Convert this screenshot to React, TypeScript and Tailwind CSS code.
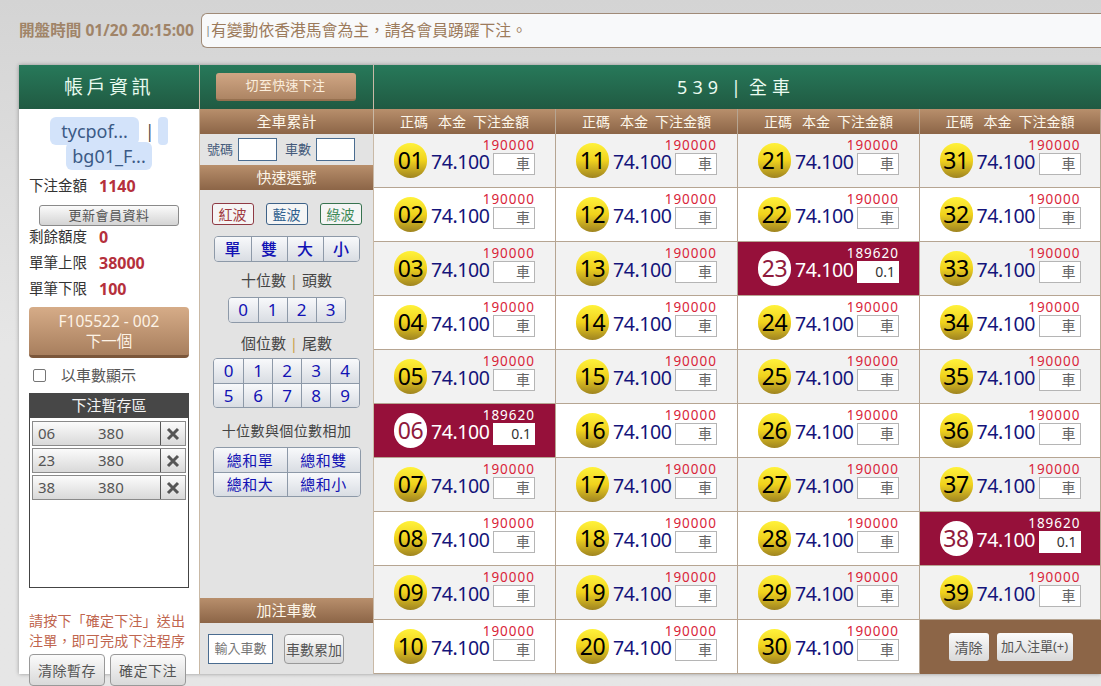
const sans = 'font-["Noto_Sans","Noto_Sans_CJK_TC",sans-serif]';
const brownBase = "bg-gradient-to-b from-[#b88f6c] to-[#8c6547] text-[#fdf6e9] text-center shrink-0";
const brownBar = brownBase + " text-[15px]";
const silver = "bg-gradient-to-b from-[#fbfbfb] to-[#d9d9d9]";
const blueBtn = "bg-gradient-to-b from-[#f8f9fb] to-[#d9dde3] text-[#1212b4] flex items-center justify-center border-[#8d99a8]";

function Ball({ n, active }: { n: string; active: boolean }) {
  return (
    <div
      className={
        "w-[33px] h-[35px] rounded-full flex items-center justify-center text-[23px] tracking-[-0.5px] leading-none shrink-0 " +
        (active
          ? "bg-white text-[#8f1a3c]"
          : "bg-gradient-to-b from-[#fff23a] via-[#f0d21c] to-[#9f8420] text-black")
      }
    >
      {n}
    </div>
  );
}

function Cell({ num, row }: { num: number; row: number }) {
  const n = String(num).padStart(2, "0");
  const active = num === 6 || num === 23 || num === 38;
  const bg = active ? "bg-[#96103a]" : row % 2 === 0 ? "bg-[#f2f2f2]" : "bg-white";
  return (
    <div className={"w-full h-[54px] shrink-0 flex items-center justify-center border-b border-r border-[#b6a592] " + bg}>
      <div className="flex items-center w-[141px] shrink-0">
        <Ball n={n} active={active} />
        <span className={"ml-[4px] mt-[3px] w-[58px] shrink-0 whitespace-nowrap text-[19.5px] leading-none tracking-[-0.4px] " + (active ? "text-white" : "text-[#14147a]")}>74.100</span>
        <div className="ml-[4px] w-[42px] shrink-0 flex flex-col items-end mb-[8px]">
          <span className={"text-[13.5px] leading-[14px] tracking-[1px] whitespace-nowrap " + (active ? "text-white" : "text-[#d9253a]")}>
            {active ? "189620" : "190000"}
          </span>
          <div className={"w-[42px] h-[22px] mt-[1px] flex items-center justify-end pr-[4px] text-[14px] leading-none " + (active ? "bg-white text-[#333]" : "bg-white border border-[#b5b5b5] text-[#666]")}>
            {active ? "0.1" : "車"}
          </div>
        </div>
      </div>
    </div>
  );
}

function Column({ start, last }: { start: number; last?: boolean }) {
  const nums = Array.from({ length: 10 }, (_, i) => start + i);
  return (
    <div className={(last ? "w-[181px]" : "w-[182px]") + " shrink-0 flex flex-col"}>
      <div className={brownBase + " h-[25px] flex items-center justify-center text-[14px] border-r border-[#b6a592]"}>
        <span>正碼</span><span className="ml-[10px]">本金</span><span className="ml-[7px]">下注金額</span>
      </div>
      {nums.map((num, i) =>
        last && i === 9 ? (
          <div key={num} className="h-[54px] shrink-0 bg-[#8c6547] flex items-center justify-center gap-[8px]">
            <div className={silver + " w-[40px] h-[28px] rounded-[3px] text-[#555] text-[14px] flex items-center justify-center"}>清除</div>
            <div className={silver + " w-[76px] h-[28px] rounded-[3px] text-[#555] text-[13px] flex items-center justify-center whitespace-nowrap"}>加入注單(+)</div>
          </div>
        ) : (
          <Cell key={num} num={num} row={i} />
        )
      )}
    </div>
  );
}

function Stat({ label, value }: { label: string; value: string }) {
  return (
    <div className="flex items-center h-[26px] shrink-0 pl-[10px] text-[14.5px] text-[#333]">
      <span>{label}</span>
      <span className="ml-[12px] font-bold text-[#b5303c] text-[16px]">{value}</span>
    </div>
  );
}

function Saved({ n }: { n: string }) {
  return (
    <div className={silver + " flex h-[25px] border border-[#8a8a8a] items-center text-[15px] text-[#555] mb-[2px]"}>
      <span className="w-[65px] pl-[5px]">{n}</span>
      <span className="w-[62px]">380</span>
      <span className="flex-1 h-full border-l border-[#555] flex items-center justify-center">
        <svg width="14" height="14" viewBox="0 0 14 14"><path d="M2 2 12 12M12 2 2 12" stroke="#555" strokeWidth="3" /></svg>
      </span>
    </div>
  );
}

function BtnRow({ items, w, h, text = "text-[18px]" }: { items: string[]; w: number; h: number; text?: string }) {
  return (
    <div className="flex rounded-[4px] border border-[#8d99a8] overflow-hidden">
      {items.map((t, i) => (
        <div key={t} style={{ width: w, height: h }} className={blueBtn + " " + text + (i ? " border-l" : "")}>{t}</div>
      ))}
    </div>
  );
}

export default function App() {
  return (
    <div className={sans + " w-[1101px] h-[686px] overflow-hidden bg-gradient-to-b from-[#d4d4d4] via-[#e6e6e6] to-[#e6e6e6] pt-[13px]"}>
      <div className="flex items-center h-[35px] pl-[19px]">
        <span className="text-[#a08468] font-bold text-[15.6px] w-[182px] whitespace-nowrap">開盤時間 01/20 20:15:00</span>
        <div className="flex-1 h-[35px] rounded-l-[6px] border border-[#a08b78] border-r-0 bg-[#f8f9fa] flex items-center pl-[3px] text-[15.8px] text-[#9c7b5c]">
          <span className="w-[6px] text-[11px] text-[#777]">|</span>
          <span>有變動依香港馬會為主，請各會員踴躍下注。</span>
        </div>
      </div>

      <div className="ml-[19px] mt-[17px] flex h-[609px] bg-white shadow-[0_0_4px_rgba(0,0,0,0.35)]">
        {/* left */}
        <div className="w-[180px] shrink-0 flex flex-col">
          <div className="h-[44px] shrink-0 bg-gradient-to-b from-[#27795a] to-[#205a42] text-[#e8fbef] text-[19px] tracking-[3.5px] flex items-center justify-center">帳戶資訊</div>
          <div className="mt-[10px] shrink-0 text-center text-[18px] leading-[25px] text-[#3b5a86]">
            <span className="bg-[#d3e3fa] rounded-[6px] px-[11px] py-[2px]">tycpof...</span>
            <span className="ml-[6px] mr-[3px] text-[#555]">|</span>
            <span className="bg-[#d3e3fa] rounded-[4px] pl-[10px] py-[2px]"></span>
            <br />
            <span className="bg-[#d3e3fa] rounded-[6px] px-[6px] py-[2px]">bg01_F...</span>
          </div>
          <div className="mt-[4px] shrink-0"><Stat label="下注金額" value="1140" /></div>
          <div className="mx-[20px] mt-[6px] h-[21px] shrink-0 border border-[#8a8a8a] rounded-[3px] bg-gradient-to-b from-[#fbfbfb] to-[#d4d4d4] text-[#555] text-[13px] tracking-[0.5px] flex items-center justify-center">更新會員資料</div>
          <div className="-mt-[2px] shrink-0"><Stat label="剩餘額度" value="0" /></div>
          <Stat label="單筆上限" value="38000" />
          <Stat label="單筆下限" value="100" />
          <div className="mx-[10px] mt-[5px] h-[51px] shrink-0 rounded-[4px] bg-gradient-to-b from-[#d6ac88] to-[#a87f5e] border-b-[3px] border-[#7b573b] text-[#fdf3e6] text-[15.5px] leading-[20px] flex flex-col items-center justify-center">
            <span>F105522 - 002</span><span>下一個</span>
          </div>
          <label className="flex items-center h-[35px] shrink-0 pl-[14px] text-[15px] text-[#555]">
            <span className="w-[13px] h-[13px] border border-[#767676] rounded-[2px] bg-white" />
            <span className="ml-[15px]">以車數顯示</span>
          </label>
          <div className="mx-[10px] h-[195px] shrink-0 border border-[#444] border-t-0 flex flex-col">
            <div className="h-[25px] shrink-0 -mx-[1px] bg-[#474747] text-[#f4f4f4] text-[15px] flex items-center justify-center">下注暫存區</div>
            <div className="p-[2px] pt-[3px]">
              <Saved n="06" /><Saved n="23" /><Saved n="38" />
            </div>
          </div>
          <div className="mx-[10px] mt-[23px] shrink-0 text-[#c0654e] text-[14px] leading-[20px] tracking-[0.2px] whitespace-nowrap">請按下「確定下注」送出<br />注單，即可完成下注程序</div>
          <div className="mx-[10px] mt-[3px] shrink-0 flex gap-[5px]">
            <div className={silver + " w-[76px] h-[32px] shrink-0 rounded-[4px] border border-[#999] text-[#555] text-[14px] tracking-[0.5px] flex items-center justify-center"}>清除暫存</div>
            <div className={silver + " w-[76px] h-[32px] shrink-0 rounded-[4px] border border-[#999] text-[#555] text-[14px] tracking-[0.5px] flex items-center justify-center"}>確定下注</div>
          </div>
        </div>

        {/* middle */}
        <div className="w-[175px] shrink-0 flex flex-col bg-[#e3e3e3] border-l border-r border-[#c9b9a6]">
          <div className="h-[44px] shrink-0 bg-gradient-to-b from-[#27795a] to-[#205a42] flex items-center justify-center pr-[2px]">
            <div className="w-[140px] h-[28px] rounded-[3px] bg-gradient-to-b from-[#d0a684] to-[#ad8564] border-b-2 border-[#96704f] text-[#fbeedd] text-[13px] tracking-[0.3px] flex items-center justify-center">切至快速下注</div>
          </div>
          <div className={brownBar + " h-[25px] leading-[25px]"}>全車累計</div>
          <div className="h-[31px] shrink-0 flex items-center pl-[7px] text-[13px] text-[#44597a]">
            <span>號碼</span>
            <span className="ml-[5px] w-[39px] h-[23px] bg-white border border-[#4a6c90]" />
            <span className="ml-[8px]">車數</span>
            <span className="ml-[5px] w-[39px] h-[23px] bg-white border border-[#4a6c90]" />
          </div>
          <div className={brownBar + " h-[25px] leading-[25px]"}>快速選號</div>
          <div className="mt-[13px] flex justify-center gap-[12px] text-[14px]">
            <span className="w-[42px] h-[22px] rounded-[3px] border border-[#8f3a44] bg-[#f5f5f5] text-[#a03a40] flex items-center justify-center">紅波</span>
            <span className="w-[42px] h-[22px] rounded-[3px] border border-[#3e6288] bg-[#f5f5f5] text-[#2f5f8f] flex items-center justify-center">藍波</span>
            <span className="w-[42px] h-[22px] rounded-[3px] border border-[#37734f] bg-[#f5f5f5] text-[#3d8a58] flex items-center justify-center">綠波</span>
          </div>
          <div className="mt-[11px] flex justify-center"><BtnRow items={["單", "雙", "大", "小"]} w={36} h={24} text="text-[16px] font-medium" /></div>
          <div className="mt-[6px] h-[24px] text-center text-[15px] leading-[24px] text-[#444]">十位數 <span className="text-[#8a7a55]">|</span> 頭數</div>
          <div className="mt-[5px] flex justify-center"><BtnRow items={["0", "1", "2", "3"]} w={29} h={24} text="text-[17px]" /></div>
          <div className="mt-[8px] h-[24px] text-center text-[15px] leading-[24px] text-[#444]">個位數 <span className="text-[#c9a04a]">|</span> 尾數</div>
          <div className="mt-[3px] flex justify-center">
            <div className="rounded-[4px] border border-[#8d99a8] overflow-hidden">
              <div className="flex border-b border-[#8d99a8]">
                {["0", "1", "2", "3", "4"].map((t, i) => <div key={t} className={blueBtn + " w-[29px] h-[24px] text-[17px]" + (i ? " border-l" : "")}>{t}</div>)}
              </div>
              <div className="flex">
                {["5", "6", "7", "8", "9"].map((t, i) => <div key={t} className={blueBtn + " w-[29px] h-[23px] text-[17px]" + (i ? " border-l" : "")}>{t}</div>)}
              </div>
            </div>
          </div>
          <div className="mt-[11px] h-[24px] text-center text-[14px] tracking-[0.4px] leading-[24px] text-[#444]">十位數與個位數相加</div>
          <div className="mt-[4px] flex justify-center">
            <div className="rounded-[4px] border border-[#8d99a8] overflow-hidden">
              <div className="flex border-b border-[#8d99a8]">
                {["總和單", "總和雙"].map((t, i) => <div key={t} className={blueBtn + " w-[73px] h-[24px] text-[15px] tracking-[0.5px]" + (i ? " border-l" : "")}>{t}</div>)}
              </div>
              <div className="flex">
                {["總和大", "總和小"].map((t, i) => <div key={t} className={blueBtn + " w-[73px] h-[23px] text-[15px] tracking-[0.5px]" + (i ? " border-l" : "")}>{t}</div>)}
              </div>
            </div>
          </div>
          <div className="flex-1" />
          <div className={brownBar + " h-[25px] leading-[25px]"}>加注車數</div>
          <div className="h-[51px] shrink-0 flex items-start pt-[11px] pl-[8px]">
            <div className="w-[65px] h-[30px] bg-white border border-[#4a6c90] text-[#777] text-[13px] flex items-center justify-center">輸入車數</div>
            <div className={silver + " ml-[11px] w-[60px] h-[30px] rounded-[4px] border border-[#999] text-[#555] text-[14px] flex items-center justify-center whitespace-nowrap"}>車數累加</div>
          </div>
        </div>

        {/* grid */}
        <div className="flex-1 flex flex-col min-w-0 overflow-hidden">
          <div className="h-[44px] shrink-0 bg-gradient-to-b from-[#27795a] to-[#205a42] text-[#eafbf0] text-[18px] flex items-center justify-center pr-[3px]">
            <span className="tracking-[5px]">539</span><span className="mx-[8px]">|</span><span className="tracking-[5px]">全車</span>
          </div>
          <div className="flex">
            <Column start={1} />
            <Column start={11} />
            <Column start={21} />
            <Column start={31} last />
          </div>
        </div>
      </div>
    </div>
  );
}
